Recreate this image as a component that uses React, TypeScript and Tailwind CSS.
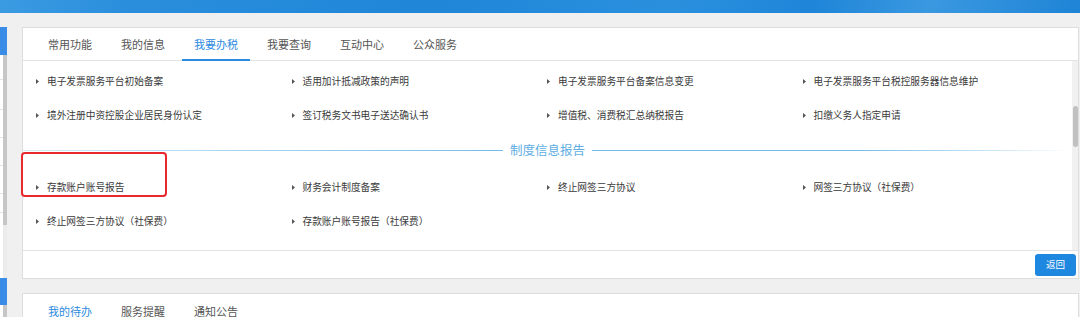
import React from "react";

const rows1: string[][] = [
  ["电子发票服务平台初始备案", "适用加计抵减政策的声明", "电子发票服务平台备案信息变更", "电子发票服务平台税控服务器信息维护"],
  ["境外注册中资控股企业居民身份认定", "签订税务文书电子送达确认书", "增值税、消费税汇总纳税报告", "扣缴义务人指定申请"],
];
const rows2: string[][] = [
  ["存款账户账号报告", "财务会计制度备案", "终止网签三方协议", "网签三方协议（社保费）"],
  ["终止网签三方协议（社保费）", "存款账户账号报告（社保费）", "", ""],
];

function Arrow() {
  return (
    <svg width="3" height="5" viewBox="0 0 3 5" className="mr-[8px] shrink-0">
      <polygon points="0,0 3,2.5 0,5" fill="#555" />
    </svg>
  );
}

function Row({ items }: { items: string[] }) {
  return (
    <div className="h-[34px] grid grid-cols-[repeat(4,255.5px)] items-center">
      {items.map((t, i) => (
        <div key={i} className="flex items-center">
          {t ? (
            <>
              <Arrow />
              <span className="text-[9.7px] leading-none text-[#3a3a3a] whitespace-nowrap">{t}</span>
            </>
          ) : null}
        </div>
      ))}
    </div>
  );
}

function Tabs({ tabs, active, underline }: { tabs: string[]; active: number; underline: boolean }) {
  return (
    <div className="flex h-[32px] pl-[13px] gap-[5px]">
      {tabs.map((t, i) => (
        <div
          key={t}
          className={
            "relative px-[12px] flex items-center text-[11px] leading-none " +
            (i === active ? "text-[#2b8ae0]" : "text-[#555555]")
          }
        >
          {t}
          {underline && i === active ? (
            <div className="absolute left-0 right-0 bottom-[-1px] h-[2px] bg-[#2b8ae0]" />
          ) : null}
        </div>
      ))}
    </div>
  );
}

function Sidebar() {
  return (
    <div className="w-[7px] flex flex-col h-[290px]">
      <div className="h-[28px] bg-[#3a8de6]" />
      <div className="h-[170px] bg-white flex">
        <div className="w-[3px] flex flex-col">
          <div className="h-[25px] border-b border-[#e4e4e4]" />
          <div className="h-[30px] border-b border-[#e4e4e4]" />
          <div className="h-[28px] border-b border-[#e4e4e4]" />
          <div className="h-[28px] border-b border-[#e4e4e4]" />
          <div className="h-[28px] border-b border-[#e4e4e4]" />
          <div className="h-[19px] border-b border-[#e4e4e4]" />
        </div>
        <div className="flex-1 bg-[#c6c6c6]" />
      </div>
      <div className="h-[53px] bg-white flex">
        <div className="w-[3px]" />
        <div className="flex-1 bg-[#ececec]" />
      </div>
      <div className="h-[27px] bg-[#3a8de6]" />
      <div className="flex-1 bg-white flex">
        <div className="w-[3px]" />
        <div className="flex-1 bg-[#c6c6c6]" />
      </div>
    </div>
  );
}

export default function App() {
  return (
    <div className="relative w-[1080px] h-[317px] overflow-hidden bg-[#f0f0f0] font-['Noto_Sans_CJK_SC','Noto_Sans',sans-serif]">
      <div className="h-[13px] bg-[linear-gradient(100deg,#3b9be2_0%,#2a8edc_12%,#1f86d8_40%,#2a90de_62%,#1f85d8_75%,#3a98e0_86%,#1f84d6_100%)]" />
      <div className="flex pt-[14px]">
        <Sidebar />
        <div className="ml-[15px] mr-[1px] flex-1 flex flex-col">
          {/* main card */}
          <div className="bg-white border border-[#dedede] flex flex-col">
            <div className="border-b border-[#e3e3e3]">
              <Tabs tabs={["常用功能", "我的信息", "我要办税", "我要查询", "互动中心", "公众服务"]} active={2} underline />
            </div>
            <div className="h-[189px] flex overflow-hidden">
              <div className="flex-1 pt-[4px]">
                <div className="pl-[13px]">
                  <Row items={rows1[0]} />
                  <Row items={rows1[1]} />
                </div>
                <div className="h-[35px] flex items-center">
                  <div className="flex-1 h-[1px] bg-[linear-gradient(to_right,#d4ebf9,#72bbe8)]" />
                  <div className="mx-[7px] text-[12.5px] leading-none text-[#5eaee3] whitespace-nowrap">制度信息报告</div>
                  <div className="flex-1 h-[1px] bg-[linear-gradient(to_right,#72bbe8_0%,#72bbe8_55%,#ffffff_100%)]" />
                </div>
                <div className="pl-[13px] mt-[3px]">
                  <Row items={rows2[0]} />
                  <Row items={rows2[1]} />
                </div>
              </div>
              <div className="w-[6px] bg-[#f1f1f1] flex justify-end">
                <div className="w-[5px] h-[41px] mt-[45px] rounded-[3px] bg-[#c1c1c1]" />
              </div>
            </div>
            <div className="h-[28px] border-t border-[#e3e3e3] flex items-center justify-end pr-[2px]">
              <button className="h-[22px] w-[41px] rounded-[3px] bg-[#1e87df] text-white text-[9.5px] leading-none flex items-center justify-center">
                返回
              </button>
            </div>
          </div>
          {/* second card */}
          <div className="mt-[14px] bg-white border border-[#dedede] h-[60px]">
            <div className="pt-[1px]">
              <Tabs tabs={["我的待办", "服务提醒", "通知公告"]} active={0} underline={false} />
            </div>
          </div>
        </div>
      </div>
      {/* red annotation box */}
      <div className="absolute left-[21px] top-[152px] w-[146px] h-[45px] border-2 border-[#e8282c] rounded-[4px]" />
    </div>
  );
}
